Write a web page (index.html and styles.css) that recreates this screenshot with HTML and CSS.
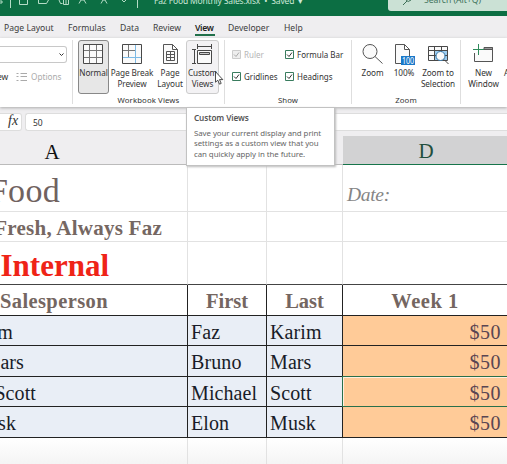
FILE: index.html
```html
<!DOCTYPE html>
<html lang="en">
<head>
<meta charset="utf-8">
<title>Faz Food Monthly Sales.xlsx</title>
<link rel="stylesheet" href="styles.css">
</head>
<body>
<div class="app">
  <header class="titlebar">
    <svg class="quick" width="142" height="16" viewBox="0 0 142 16" fill="none" stroke="#b5dcc6">
      <path d="M0 1h2v2H0M10.500 0v8M19.500 0v4.500h8V0M38.500 0v3.500h8l2-3.500M59 0l1.500 3.500h2M63.500 0v4.500h5V0M66 0v4M79 3.500l2-3.500h3l2 3.500M101 3.500l2-3.500h2l2 3.500M122 0l2 2 2-2M137.500 0v8"/>
    </svg>
    <span class="doc-name">Faz Food Monthly Sales.xlsx&nbsp; • &nbsp;Saved &nbsp;▾</span>
    <div class="search">
      <svg width="12" height="8" viewBox="0 0 12 8" fill="none" stroke="#3c6e56"><path d="M1 5l4-4M4 0q2 3 5 0"/></svg>
      <span>Search (Alt+Q)</span>
    </div>
  </header>
  <nav class="tabs">
    <span class="w-layout">Page Layout</span><span class="w-formulas">Formulas</span><span class="w-data">Data</span><span class="w-review">Review</span><span class="w-view active">View</span><span class="w-dev">Developer</span><span>Help</span>
  </nav>
  <section class="ribbon">
    <div class="group g-sheet">
      <div class="combo"><svg width="5" height="4" viewBox="0 0 5 4" fill="none" stroke="#333"><path d="M.5.500l2 2 2-2"/></svg></div>
      <div class="sheet-actions"><span class="new">ew</span>
        <svg width="12" height="10" viewBox="0 0 12 10" fill="none" stroke="#aaa"><path d="M4.500 1.500H11M4.500 4.500H11M4.500 8.500H11M.500 1.500h2M.500 4.500h2M.500 8.500h2"/></svg>
        <span class="options">Options</span></div>
    </div>
    <div class="group g-views">
      <div class="buttons">
        <div class="btn normal">
          <svg width="20" height="20" viewBox="0 0 20 20" fill="#fafafa" stroke="#484848"><path d="M.5.500h19v19H.500z"/><path d="M6.500 1v18M13.500 1v18M1 6.500h18M1 13.500h18" stroke="#777"/></svg>
          <span>Normal</span></div>
        <div class="btn break">
          <svg width="20" height="20" viewBox="0 0 20 20" fill="#fafafa" stroke="#484848"><path d="M.5.500h19v19H.500z"/><path d="M6.500 1v12M1 6.500h12" stroke="#777"/><path d="M13.500 1v18M1 13.500h18" stroke="#7dbbe6"/></svg>
          <span>Page Break<br>Preview</span></div>
        <div class="btn page">
          <svg width="15" height="20" viewBox="0 0 15 20" fill="#fafafa" stroke="#555"><path d="M.5.500h9l5 5v14H.500zM9.500.500v5h5"/><path d="M3.500 7.500h8v9h-8zM3.500 10.500h8M3.500 13.500h8M7.500 7.500v9"/></svg>
          <span>Page<br>Layout</span></div>
        <div class="btn custom">
          <svg width="20" height="20" viewBox="0 0 20 20" fill="none" stroke="#484848"><path d="M5.500 0v5M19.500 0v5M5.500 2.500h14M0 5.500h4M0 19.500h4M2.500 5.500v14"/><path d="M5.500 6.500h14v13h-14z" fill="#fafafa"/><path d="M7.500 8.500h10v2h-10z" fill="#ccc"/></svg>
          <span>Custom<br>Views</span></div>
      </div>
      <div class="group-name">Workbook Views</div>
    </div>
    <div class="group g-show">
      <div class="checks">
        <label class="off"><svg width="9" height="9" viewBox="0 0 9 9"><path d="M.5.500h8v8h-8z"/><path class="tick" d="M2 4.500l2 2 3-4"/></svg>Ruler</label>
        <label><svg width="9" height="9" viewBox="0 0 9 9"><path d="M.5.500h8v8h-8z"/><path class="tick" d="M2 4.500l2 2 3-4"/></svg>Formula Bar</label>
        <label><svg width="9" height="9" viewBox="0 0 9 9"><path d="M.5.500h8v8h-8z"/><path class="tick" d="M2 4.500l2 2 3-4"/></svg>Gridlines</label>
        <label><svg width="9" height="9" viewBox="0 0 9 9"><path d="M.5.500h8v8h-8z"/><path class="tick" d="M2 4.500l2 2 3-4"/></svg>Headings</label>
      </div>
      <div class="group-name">Show</div>
    </div>
    <div class="group g-zoom">
      <div class="buttons">
        <div class="btn zoom">
          <svg width="21" height="20" viewBox="0 0 21 20" fill="#fafafa" stroke="#555"><circle cx="8" cy="7.500" r="7"/><path d="M13 12.500l7.500 7"/></svg>
          <span>Zoom</span></div>
        <div class="btn hundred">
          <svg width="20" height="21" viewBox="0 0 20 21" fill="#fafafa" stroke="#555"><path d="M.5.500h9l5 5v14H.500zM9.500.500v5h5"/><path d="M6 12h14v9H6z" fill="#1a78c9" stroke="none"/><text x="7" y="19.500" textLength="12" lengthAdjust="spacingAndGlyphs" class="badge">100</text></svg>
          <span>100%</span></div>
        <div class="btn selection">
          <svg width="21" height="20" viewBox="0 0 21 20" fill="#fafafa" stroke="#484848"><path d="M.5 2.500h19v14H.500z"/><path d="M7 7h12v9H7z" fill="#9dcdf0" stroke="none"/><path d="M6.500 2v14M13.500 2v14M0 6.500h19M0 11.500h19"/><circle cx="12.500" cy="12" r="4.500" stroke="#3477aa"/><path d="M16 15.500l4.500 4.500"/></svg>
          <span>Zoom to<br>Selection</span></div>
      </div>
      <div class="group-name">Zoom</div>
    </div>
    <div class="group g-window">
      <div class="buttons">
        <div class="btn window">
          <svg width="21" height="20" viewBox="0 0 21 20" fill="none" stroke="#555"><path d="M1.500 9v8.500h18V3.500H11" fill="#fafafa" stroke="none"/><path d="M1.500 9v8.500M19.500 17.500v-14M1.500 17.500h18"/><path d="M11 3.500h8.500v2H11z" fill="#999"/><path d="M5.500 0v11M0 5.500h11" stroke="#2f8b5b"/></svg>
          <span>New<br>Window</span></div>
        <div class="btn arrange"><span>A</span></div>
      </div>
    </div>
  </section>
  <div class="formula">
    <div class="fx"><i>fx</i></div><div class="value">50</div>
  </div>
  <main class="sheet">
    <div class="head">A</div><div class="head"></div><div class="head"></div><div class="head selected"><span>D</span></div>
    <div class="cell brand"><span>Food</span></div><div class="cell"></div><div class="cell"></div><div class="cell date"><span>Date:</span></div>
    <div class="cell slogan"><span>Fresh, Always Faz</span></div><div class="cell"></div><div class="cell"></div><div class="cell"></div>
    <div class="cell internal"><span>Internal</span></div><div class="cell"></div><div class="cell"></div><div class="cell"></div>
    <div class="cell th sales"><span>Salesperson</span></div><div class="cell th"><span>First</span></div><div class="cell th"><span>Last</span></div><div class="cell th week"><span>Week 1</span></div>
    <div class="cell td end-m"><span>m</span></div><div class="cell td"><span>Faz</span></div><div class="cell td"><span>Karim</span></div><div class="cell td money"><span>$50</span></div>
    <div class="cell td end-ars"><span>ars</span></div><div class="cell td"><span>Bruno</span></div><div class="cell td"><span>Mars</span></div><div class="cell td money"><span>$50</span></div>
    <div class="cell td end-scott"><span>Scott</span></div><div class="cell td"><span>Michael</span></div><div class="cell td"><span>Scott</span></div><div class="cell td money current"><span>$50</span></div>
    <div class="cell td end-sk"><span>sk</span></div><div class="cell td"><span>Elon</span></div><div class="cell td"><span>Musk</span></div><div class="cell td money"><span>$50</span></div>
    <div class="cell last"></div><div class="cell last"></div><div class="cell last"></div><div class="cell last"></div>
  </main>
  <aside class="tooltip"><b>Custom Views</b><p>Save your current display and print<br>settings as a custom view that you<br>can quickly apply in the future.</p></aside>
  <svg class="cursor" width="9" height="14" viewBox="0 0 9 14"><path d="M.5.700v10.500l2.300-2 1.700 4 1.700-.8-1.700-3.800h3.300z" fill="#fff" stroke="#222" stroke-width=".8"/></svg>
</div>
</body>
</html>
```
FILE: styles.css
```css
* { box-sizing: border-box; }
body { margin: 0; }
.app {
  position: relative;
  width: 507px;
  height: 464px;
  overflow: hidden;
  background: #efeef0;
  font: 8.5px/11px "Noto Sans", sans-serif;
  color: #333;
  white-space: nowrap;
}
svg { display: block; flex: none; }

.titlebar {
  display: flex;
  height: 16px;
  background: #0c6e43;
  color: #cde8d9;
  overflow: hidden;
}
.doc-name { width: 247px; padding-left: 12px; margin-top: -5px; letter-spacing: -.17px; }
.search {
  display: flex;
  width: 130px;
  height: 11px;
  margin-left: -1px;
  padding-left: 14px;
  gap: 9px;
  flex: none;
  border-radius: 0 0 0 3px;
  background: #cbe1d5;
  color: #40735b;
  font-size: 8.600px;
}
.search svg { margin-right: 1px; }
.search span { margin-top: -5px; }
.doc-name { flex: none; }

.tabs { display: flex; height: 22px; padding: 7px 0 0 4px; font-size: 8.600px; color: #3c3c3c; }
.tabs span { height: 13px; }
.w-layout { width: 64px; }
.w-formulas { width: 52px; }
.w-data { width: 33px; }
.w-review { width: 42px; }
.w-view { width: 20px; margin-right: 13px; }
.w-dev { width: 56px; }
.tabs .active { border-bottom: 2px solid #21704a; font-weight: 600; letter-spacing: -.3px; color: #222; }

.ribbon {
  display: flex;
  height: 69px;
  background: #fff;
  box-shadow: 0 1px 3px #aaa;
}
.group {
  display: flex;
  flex-direction: column;
  justify-content: space-between;
  flex: none;
  padding-bottom: 2px;
  border-right: 1px solid #dedede;
  border-image: linear-gradient(#fff 3px, #dedede 3px 65px, #fff 65px) 1;
}
.g-sheet { width: 73px; justify-content: flex-start; }
.g-views { width: 152px; }
.g-show { width: 127px; }
.g-zoom { width: 109px; }
.g-window { width: 46px; border: 0; }
.combo {
  display: flex;
  align-items: center;
  justify-content: flex-end;
  width: 67px;
  height: 17px;
  margin-top: 8px;
  padding-right: 2px;
  border: 1px solid #c8c8c8;
  border-left: 0;
  border-radius: 0 3px 3px 0;
}
.sheet-actions { display: flex; align-items: center; margin-top: 8px; }
.new { width: 17px; margin-left: -3px; margin-right: 2px; }
.options { margin-left: 3px; color: #aaa; font-size: 8.200px; }
.buttons { display: flex; padding-top: 2px; }
.btn {
  display: flex;
  flex-direction: column;
  align-items: center;
  height: 54px;
  padding-top: 4px;
  text-align: center;
  font-size: 8.200px;
  letter-spacing: -.08px;
  flex: none;
}
.btn svg { margin-bottom: 3px; height: 20px; }
.normal { width: 31px; margin-left: 5px; padding-top: 3px; border: 1px solid #888; border-radius: 3px; background: #e7e7e7; }
.normal svg { margin-right: 1px; }
.break { width: 46px; }
.page { width: 30px; }
.custom { width: 33px; margin-left: 1px; padding-top: 3px; border: 1px solid #ccc; border-radius: 3px; background: #f3f2f4; }
.custom svg { margin-right: 1px; }
.zoom { width: 31px; margin-left: 5px; }
.hundred { width: 32px; }
.hundred svg { height: 21px; margin: 0 0 2px 2px; }
.selection { width: 36px; }
.badge { font: 8px "Noto Sans", sans-serif; fill: #fff; stroke: none; }
.window { width: 37px; margin-left: 4px; }
.arrange { padding-top: 27px; margin-left: 2px; }
.group-name { text-align: center; font-size: 7.800px; line-height: 10px; letter-spacing: .1px; }
.checks {
  display: grid;
  grid-template-columns: 53px 70px;
  grid-template-rows: 22px 22px;
  padding: 5px 0 0 7px;
}
.checks label { display: flex; align-items: center; gap: 3px; font-size: 8px; }
.checks svg { fill: #fff; stroke: #397c5e; }
.checks .tick { fill: none; stroke: #333; }
.checks .off { color: #b5b5b5; }
.off svg { fill: #eee; stroke: #ccc; }
.checks .off .tick { stroke: #aaa; }

.formula { display: flex; height: 24px; padding-top: 6px; gap: 3px; }
.fx, .value { height: 18px; background: #fff; border: 1px solid #ddd; }
.fx {
  width: 22px;
  border-left: 0;
  border-radius: 0 3px 3px 0;
  padding-left: 8px;
  font: 14px/14px "Liberation Serif", serif;
}
.value { flex: 1; padding-left: 7px; border-radius: 3px 0 0 3px; border-right: 0; font-size: 8.500px; line-height: 17px; }

.sheet {
  display: grid;
  grid-template-columns: 188px 79px 76px 164px;
  grid-template-rows: 34px 47px 30px 43px 31px 30px 31px 30px 31px 27px;
  font-family: "Liberation Serif", serif;
  font-size: 20px;
  line-height: 30px;
  color: #181c28;
}
.head {
  padding-top: 6px;
  border-bottom: 1px solid #bbb;
  text-align: center;
  line-height: 30px;
  font-size: 21px;
  height: 34px;
  color: #111;
}
.head:first-child { padding-right: 84px; }
.head.selected {
  margin-top: 5px;
  height: 29px;
  padding: 0 0 0 2px;
  border-bottom: 1px solid #16744a;
  background: #d2d2d3;
  color: #224f3d;
}
.cell { background: #fff; border-right: 1px solid #e2e2e2; border-bottom: 1px solid #e2e2e2; overflow: hidden; }
.cell:nth-child(4n) { border-right: 0; }
.cell span { display: inline-block; }
.brand { padding-right: 127px; display: flex; justify-content: flex-end; font-size: 34px; line-height: 51px; letter-spacing: .3px; color: #70625f; }
.date { padding: 15px 0 0 4px; font-style: italic; font-size: 19.500px; letter-spacing: -.3px; color: #858585; }
.slogan { padding: 1px 25px 0 0; display: flex; justify-content: flex-end; font-weight: bold; font-size: 21px; letter-spacing: .25px; color: #756762; }
.internal { padding: 9px 78px 0 0; display: flex; justify-content: flex-end; font-weight: bold; font-size: 31px; color: #ef2417; border-bottom-color: #444; }
.internal ~ .cell { border-right-color: #222; border-bottom-color: #222; }
.internal + .cell, .internal + .cell + .cell, .internal + .cell + .cell + .cell { border-right-color: #e2e2e2; border-bottom-color: #444; }
.th { text-align: center; font-weight: bold; font-size: 20.500px; line-height: 33px; color: #746661; }
.th.week { letter-spacing: .5px; }
.th.sales { display: flex; justify-content: flex-end; padding-right: 79px; letter-spacing: .4px; }
.td { padding-left: 3px; background: #e9eef6; line-height: 33px; letter-spacing: .1px; }
.end-m, .end-ars, .end-scott, .end-sk { display: flex; justify-content: flex-end; padding-left: 0; }
.end-m { padding-right: 174px; }
.end-ars { padding-right: 163px; }
.end-scott { padding-right: 151px; }
.end-sk { padding-right: 171px; }
.td.money { padding-right: 6px; background: #ffcb98; text-align: right; color: #594552; }
.td.money span { letter-spacing: .5px; }
.td.current { margin: -1px 0 0 -1px; border: 1px solid #29704b; border-right: 0; box-shadow: inset 1px 1px #fff0df; }
.internal ~ .cell.last { border-color: #e2e2e2; border-bottom: 0; background: linear-gradient(#fff, #f4f4f4); }

.tooltip {
  position: absolute;
  left: 186px;
  top: 107px;
  width: 149px;
  height: 59px;
  padding: 5px 7px;
  border: 1px solid #c2c2c2;
  background: #fff;
  box-shadow: 1px 1px 2px #bbb;
  color: #666;
  line-height: 10.500px;
}
.tooltip b { display: block; font-size: 8.200px; font-weight: 600; letter-spacing: -.1px; color: #555; }
.tooltip p { margin: 4px 0 0; font-size: 7.850px; letter-spacing: -.05px; }
.cursor { position: absolute; left: 215px; top: 71px; }
```
